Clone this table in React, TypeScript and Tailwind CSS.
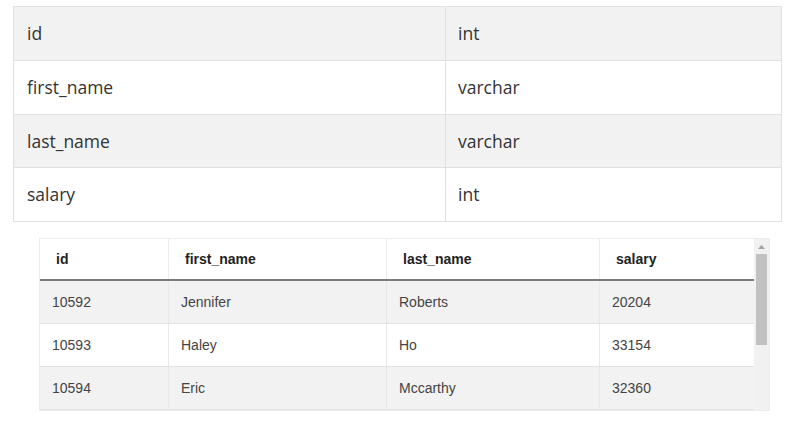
import React from "react";

const schema = [
  ["id", "int", "h-[53px]"],
  ["first_name", "varchar", "h-[53px]"],
  ["last_name", "varchar", "h-[52px]"],
  ["salary", "int", "h-[53px]"],
];

const rows = [
  ["10592", "Jennifer", "Roberts", "20204"],
  ["10593", "Haley", "Ho", "33154"],
  ["10594", "Eric", "Mccarthy", "32360"],
];

const colW = ["w-[129px]", "w-[218px]", "w-[213px]", "w-[154px]"];

export default function App() {
  return (
    <div className="w-[792px] h-[421px] bg-white overflow-hidden">
      <div className="pl-[13px] pt-[6px]">
        <div
          className="w-[769px] border border-[#dfe1e6] text-[#333333] text-[17.5px]"
          style={{ fontFamily: '"Open Sans", "Noto Sans", sans-serif' }}
        >
          {schema.map(([a, b, h], i) => (
            <div
              key={a}
              className={`flex ${h} box-content ${i < 3 ? "border-b border-[#dfe1e6]" : ""} ${i % 2 === 0 ? "bg-[#f2f2f2]" : "bg-white"}`}
            >
              <div className="w-[432px] border-r border-[#dfe1e6] flex items-center pl-[13px]">{a}</div>
              <div className="flex-1 flex items-center pl-[12px]">{b}</div>
            </div>
          ))}
        </div>
      </div>

      <div className="pl-[39px] pt-[16px]">
        <div
          className="flex w-[731px] h-[173px] border border-[#ececec] overflow-hidden"
          style={{ fontFamily: '"Liberation Sans", Arial, sans-serif' }}
        >
          <div className="w-[715px] text-[14px]">
            <div className="flex h-[42px] bg-white border-b-2 border-[#7b7b7b] text-[#222222] font-bold">
              {["id", "first_name", "last_name", "salary"].map((h, i) => (
                <div
                  key={h}
                  className={`${colW[i]} flex items-center pl-[16px] ${i < 3 ? "border-r border-[#ececec]" : ""}`}
                >
                  {h}
                </div>
              ))}
            </div>
            {rows.map((r, ri) => (
              <div
                key={r[0]}
                className={`flex h-[43px] border-b border-[#e2e2e2] text-[#444444] ${ri % 2 === 0 ? "bg-[#f2f2f2]" : "bg-white"}`}
              >
                {r.map((c, i) => (
                  <div
                    key={i}
                    className={`${colW[i]} flex items-center pl-[12px] ${i < 3 ? "border-r border-[#e8e8e8]" : ""}`}
                  >
                    {c}
                  </div>
                ))}
              </div>
            ))}
          </div>
          <div className="w-[15px] bg-[#f1f1f1] flex flex-col items-center">
            <div className="h-[15px] w-full flex items-center justify-center">
              <svg width="7" height="4" viewBox="0 0 7 4">
                <polygon points="0,4 7,4 3.5,0" fill="#a3a3a3" />
              </svg>
            </div>
            <div className="w-[11px] h-[91px] bg-[#c1c1c1]" />
          </div>
        </div>
      </div>
    </div>
  );
}
